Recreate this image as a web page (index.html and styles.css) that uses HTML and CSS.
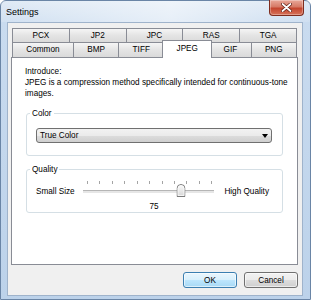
FILE: index.html
```html
<!DOCTYPE html>
<html lang="en">
<head>
  <meta charset="UTF-8">
  <meta name="viewport" content="width=device-width, initial-scale=1.0">
  <title>Settings</title>
  <link rel="stylesheet" href="styles.css">
</head>
<body>
  <div class="window">
    <div class="titlebar">
      <span class="title">Settings</span>
      <button class="close-button" aria-label="Close">
        <svg width="11" height="9" viewBox="0 0 11 9">
          <path d="M1.5 1 L9.5 8 M9.5 1 L1.5 8" stroke="#5a1a10" stroke-width="3.2" stroke-linecap="round"/>
          <path d="M1.5 1 L9.5 8 M9.5 1 L1.5 8" stroke="#ffffff" stroke-width="1.8" stroke-linecap="round"/>
        </svg>
      </button>
    </div>

    <div class="client">
      <div class="tabs">
        <div class="tab-row back">
          <div class="tab">PCX</div>
          <div class="tab">JP2</div>
          <div class="tab">JPC</div>
          <div class="tab">RAS</div>
          <div class="tab">TGA</div>
        </div>
        <div class="tab-row front">
          <div class="tab">Common</div>
          <div class="tab">BMP</div>
          <div class="tab">TIFF</div>
          <div class="tab active">JPEG</div>
          <div class="tab">GIF</div>
          <div class="tab">PNG</div>
        </div>
      </div>

      <div class="panel">
        <p class="intro">Introduce:</p>
        <p class="intro">JPEG is a compression method specifically intended for continuous-tone images.</p>

        <fieldset class="group">
          <legend>Color</legend>
          <div class="select">
            <span>True Color</span>
            <span class="arrow"></span>
          </div>
        </fieldset>

        <fieldset class="group quality">
          <legend>Quality</legend>
          <div class="slider-row">
            <span class="slider-label">Small Size</span>
            <div class="slider">
              <div class="ticks">
                <span></span><span></span><span></span><span></span><span></span><span></span>
                <span></span><span></span><span></span><span></span><span></span>
              </div>
              <div class="track"></div>
              <div class="thumb-rail">
                <svg class="thumb" style="left: 75%" width="9" height="13" viewBox="0 0 9 13">
                  <defs>
                    <linearGradient id="thumbFill" x1="0" y1="0" x2="0" y2="1">
                      <stop offset="0" stop-color="#fbfbfb"/>
                      <stop offset="1" stop-color="#d6d6d6"/>
                    </linearGradient>
                  </defs>
                  <path d="M0.5 12.5 V4.5 Q0.5 0.5 4.5 0.5 Q8.5 0.5 8.5 4.5 V12.5 Z" fill="url(#thumbFill)" stroke="#7b7b7b"/>
                  <path d="M1.5 11.5 V4.5 Q1.5 1.5 4.5 1.5 Q7.5 1.5 7.5 4.5 V11.5 Z" fill="none" stroke="#ffffff" stroke-opacity="0.7"/>
                </svg>
              </div>
            </div>
            <span class="slider-label">High Quality</span>
          </div>
          <div class="value">75</div>
        </fieldset>
      </div>

      <div class="buttons">
        <button class="btn default">OK</button>
        <button class="btn">Cancel</button>
      </div>
    </div>
  </div>
</body>
</html>
```

FILE: styles.css
```css
body {
  margin: 0;
  font-family: "Liberation Sans", Arial, sans-serif;
  font-size: 8.2px;
  color: #000;
}

.window {
  width: 311px;
  height: 300px;
  box-sizing: border-box;
  display: flex;
  flex-direction: column;
  border: 1px solid #6a85a6;
  border-radius: 6px 6px 0 0;
  background: linear-gradient(to bottom, #dbe7f4 0, #c9dbef 21px, #bcd2ea 100%);
}

/* title bar */
.titlebar {
  height: 21px;
  display: flex;
  align-items: flex-start;
  padding: 0 6px 0 5px;
  background: linear-gradient(to right, rgba(255, 255, 255, 0.15), rgba(255, 255, 255, 0.55) 55%, rgba(255, 255, 255, 0.1));
}

.title {
  font-size: 9px;
  line-height: 21px;
  padding-top: 1px;
}

.close-button {
  margin: -1px 0 0 auto;
  width: 35px;
  height: 16px;
  padding: 0;
  display: flex;
  align-items: center;
  justify-content: center;
  border: 1px solid #7e2c1d;
  border-top: none;
  border-radius: 0 0 4px 4px;
  background: linear-gradient(to bottom, #e9a899, #d67a66 45%, #c4452e 55%, #d6735a);
  box-shadow: inset 0 0 0 1px rgba(255, 255, 255, 0.3);
}

/* client area */
.client {
  flex: 1;
  margin: 0 7px 3px 6px;
  padding: 5px 4px 7px 3px;
  display: flex;
  flex-direction: column;
  border: 1px solid #9fb3cb;
  background: #f0f0f0;
}

.tabs {
  margin: 0 1px;
}

.tab-row {
  display: flex;
}

.tab {
  box-sizing: border-box;
  border: 1px solid #898c95;
  border-bottom: none;
  margin-left: -1px;
  text-align: center;
  background: linear-gradient(to bottom, #f5f5f5, #e4e4e4 50%, #dadada);
}

.tab:first-child {
  margin-left: 0;
}

.back .tab {
  flex: 1 1 0;
  height: 14px;
  line-height: 13px;
}

.front .tab {
  flex: 1 1 auto;
  height: 15px;
  line-height: 14px;
  padding: 0 6px;
}

.front .tab.active {
  position: relative;
  z-index: 1;
  height: 18px;
  margin: -2px -2px -1px -2px;
  line-height: 16px;
  background: #fff;
}

.panel {
  flex: 1;
  padding: 8px 4px 0 13px;
  border: 1px solid #898c95;
  background: #fff;
}

.intro {
  margin: 0;
  line-height: 11px;
}

.group {
  margin: 9px 10px 0 1px;
  padding: 9px 10px 12px 9px;
  border: 1px solid #d5dfe5;
  border-radius: 3px;
  min-inline-size: 0;
}

.group legend {
  margin-left: -6px;
  padding: 0 2px;
  line-height: 11px;
}

.select {
  height: 15px;
  box-sizing: border-box;
  display: flex;
  align-items: center;
  justify-content: space-between;
  padding: 0 3px;
  border: 1px solid #707070;
  border-radius: 3px;
  background: linear-gradient(to bottom, #f2f2f2, #ebebeb 50%, #dddddd 50%, #cfcfcf);
}

.arrow {
  width: 0;
  height: 0;
  border-left: 3.5px solid transparent;
  border-right: 3.5px solid transparent;
  border-top: 4px solid #000;
}

.quality {
  margin-top: 8px;
  padding: 2px 13px 0 9px;
}

.slider-row {
  display: flex;
  height: 22px;
}

.slider-label {
  align-self: flex-end;
  margin-bottom: 2px;
  line-height: 11px;
}

.slider {
  position: relative;
  flex: 1;
  margin: 0 10px 0 8px;
}

.ticks {
  display: flex;
  justify-content: space-between;
  margin: 0 2px 0 4px;
  padding-top: 4px;
}

.ticks span {
  width: 1px;
  height: 3px;
  background: #a4a4a4;
}

.track {
  margin-top: 6px;
  height: 2px;
  border-top: 1px solid #b5b5b5;
  border-bottom: 1px solid #fff;
  background: #e6e6e6;
}

.thumb-rail {
  position: absolute;
  top: 7px;
  left: 4px;
  right: 2px;
  height: 13px;
}

.thumb {
  position: absolute;
  top: 0;
  transform: translateX(-50%);
}

.value {
  margin-top: 2px;
  line-height: 11px;
  text-align: center;
  padding-left: 3px;
}

/* dialog buttons */
.buttons {
  display: flex;
  justify-content: flex-end;
  gap: 7px;
  margin-top: 7px;
}

.btn {
  width: 54px;
  height: 16px;
  padding: 0;
  font-family: inherit;
  font-size: 8.2px;
  border: 1px solid #707070;
  border-radius: 3px;
  background: linear-gradient(to bottom, #f2f2f2, #ebebeb 50%, #dddddd 50%, #cfcfcf);
  box-shadow: inset 0 0 0 1px rgba(255, 255, 255, 0.6);
}

.btn.default {
  border-color: #3c7fb1;
  background: linear-gradient(to bottom, #eaf6fd, #d9f0fc 50%, #bee6fd 50%, #a7d9f5);
}
```
